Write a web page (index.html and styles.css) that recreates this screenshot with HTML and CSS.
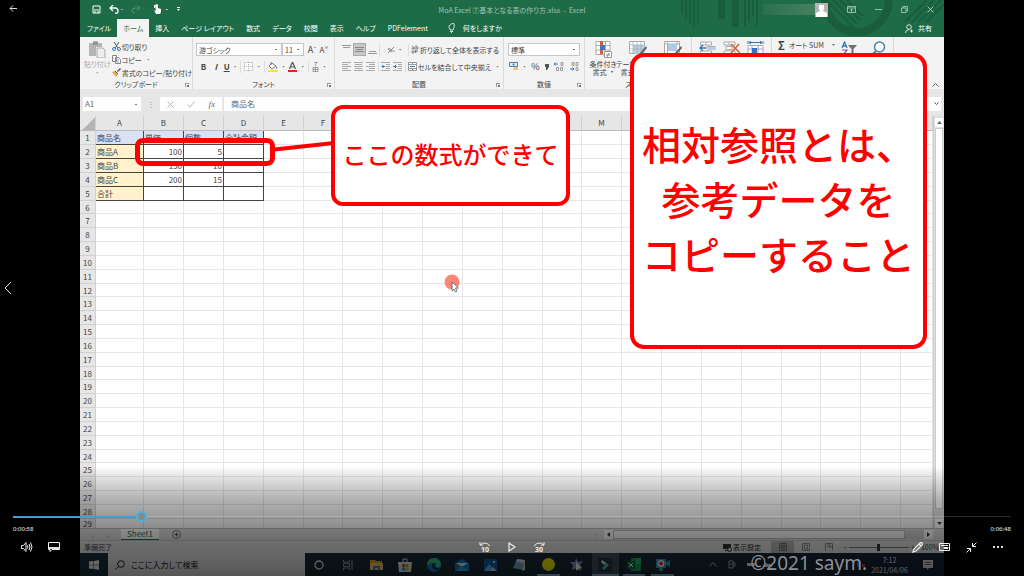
FILE: index.html
```html
<!DOCTYPE html>
<html lang="ja">
<head>
<meta charset="utf-8">
<title>MoA Excel</title>
<link rel="stylesheet" href="styles.css">
</head>
<body>
<div class="player">
  <main class="desktop">
    <header class="titlebar">
      <svg class="titlebar-art" viewBox="0 0 264 37" aria-hidden="true">
        <g fill="#1a5d3c"><path d="M1 0h2v14H1zM5 0h2v19H5zM9 0h2v23H9zM13 0h2v27h-2zM17 0h2v23h-2zM38 0h7v19h-7zM52 0h7v27h-7zM64 0h2v26h-2zM68 0h2v22h-2zM72 0h2v17h-2zM76 0h2v26h-2z"/></g>
        <g fill="none" stroke="#1a5d3c"><circle cx="177" cy="0" r="32" stroke-width="8"/><path stroke-width="2" d="M146 0l28 28M153 0l24 24M160 0l20 20M167 0l16 16M225 22l22-22M232 22l22-22M239 22l22-22M246 22l18-18"/></g>
      </svg>
      <div class="quick">
        <button aria-label="保存"><svg width="9" height="9" viewBox="0 0 9 9"><path d="M1 1h7v7H1zM2 5h5M3 6v2M6 6v2" fill="none" stroke="#fff"/></svg></button>
        <button aria-label="元に戻す"><svg width="14" height="9" viewBox="0 0 14 9"><path d="M4 0L1 3l3 3M1 3h5q3 0 3 3t-3 2" fill="none" stroke="#fff" stroke-width="1.3"/><path d="M12 4h2l-1 1z" fill="#fff"/></svg></button>
        <button aria-label="やり直し" class="faded"><svg width="14" height="9" viewBox="0 0 14 9"><path d="M6 0l3 3-3 3M9 3H4Q1 3 1 6q0 2 3 2" fill="none" stroke="#fff"/><path d="M12 4h2l-1 1z" fill="#fff"/></svg></button>
        <button aria-label="タッチ"><svg width="15" height="11" viewBox="0 0 15 11"><path d="M2 1l2-1 1 1v3l3 1v3L7 10H3L1 6l2 1zM1 1h1v3H1z" fill="#fff"/><path d="M12 5h3l-1 1z" fill="#fff"/></svg></button>
        <button aria-label="カスタマイズ"><svg width="5" height="5" viewBox="0 0 5 5"><path d="M1 0h3v1H1zM1 2h3L2.500 4z" fill="#fff"/></svg></button>
      </div>
      <div class="doc-title">MoA Excel ⑦基本となる表の作り方.xlsx&nbsp; -&nbsp; Excel</div>
      <div class="window-tools">
        <span class="user-name"></span>
        <svg class="avatar" width="13" height="14" viewBox="0 0 13 14"><path d="M0 0h13v14H0z" fill="#b5b5b5"/><path d="M4 2h5v5H8v1l4 2v4H1v-4l4-2V7H4z" fill="#fff"/></svg>
        <button aria-label="リボンの表示"><svg width="9" height="7" viewBox="0 0 9 7"><path d="M.5.5h8v6h-8zM.5 2h8M4.500 6V3M3 4.500L4.500 3 6 4.500" fill="none" stroke="#b7d1c3" stroke-width=".8"/></svg></button>
        <button aria-label="最小化"><svg width="7" height="7" viewBox="0 0 7 7"><path d="M0 3.500h7" stroke="#b7d1c3" stroke-width=".8"/></svg></button>
        <button aria-label="元のサイズ"><svg width="7" height="7" viewBox="0 0 7 7"><path d="M.5 2h4.500v4.500H.5zM2 2V.5h4.500V5H5" fill="none" stroke="#b7d1c3" stroke-width=".8"/></svg></button>
        <button aria-label="閉じる"><svg width="7" height="7" viewBox="0 0 7 7"><path d="M.5.5l6 6M6.500.5l-6 6" stroke="#cfe0d7" stroke-width=".8"/></svg></button>
      </div>
    </header>
    <nav class="tabs">
      <button>ファイル</button><button class="current">ホーム</button><button>挿入</button><button>ページ レイアウト</button><button>数式</button><button>データ</button><button>校閲</button><button>表示</button><button>ヘルプ</button><button>PDFelement</button>
      <button class="tell"><svg width="7" height="10" viewBox="0 0 7 10"><path d="M2 7Q2 6 1 4.500T3.500.8 6 4.500Q5 6 5 7zM2 8.500h3M3 9.500h1" fill="none" stroke="#fff" stroke-width=".8"/></svg>何をしますか</button>
      <button class="share"><svg width="8" height="9" viewBox="0 0 8 9"><circle cx="4" cy="3" r="2.300" fill="none" stroke="#fff" stroke-width=".8"/><path d="M.5 9Q.5 6 4 5.500M5 7h3M6.500 5.500v3" fill="none" stroke="#fff" stroke-width=".8"/></svg>共有</button>
    </nav>

    <section class="ribbon">
      <div class="group">
        <div class="group-body clipboard">
          <button class="paste"><svg width="18" height="18" viewBox="0 0 18 18"><path d="M1 3h4V1h5v2h4v4H8v9H1z" fill="#b5b5b5"/><path d="M5 2h5v3H5z" fill="#929292"/><path d="M9 8h6l2 2v8H9z" fill="#eee" stroke="#aaa"/></svg>貼り付け<i class="caret"></i></button>
          <div class="stack">
            <button><svg width="9" height="9" viewBox="0 0 9 9"><path d="M2 0l4 6M7 0L3 6" stroke="#555"/><circle cx="2" cy="7" r="1.500" fill="none" stroke="#2f78b9"/><circle cx="7" cy="7" r="1.500" fill="none" stroke="#2f78b9"/></svg>切り取り</button>
            <button><svg width="9" height="9" viewBox="0 0 9 9"><path d="M.5.5h4v6h-4zM3.500 2.500h3l2 2v4h-5z" fill="#fff" stroke="#888"/><path d="M5 5h2M5 7h2M1.500 3h1" stroke="#4b8dc5" stroke-width=".7"/></svg>コピー <i class="caret"></i></button>
            <button><svg width="9" height="9" viewBox="0 0 9 9"><path d="M5 3l3-3 1 1-3 3z" fill="#555"/><path d="M0 4l3-1 3 3-2 3z" fill="#eda64a"/><path d="M3 3l3 3" stroke="#555"/></svg>書式のコピー/貼り付け</button>
          </div>
        </div>
        <div class="group-name">クリップボード<i class="launcher"></i></div>
      </div>
      <div class="group">
        <div class="group-body rows">
          <div class="tool-row">
            <select class="font-name" aria-label="フォント"><option>游ゴシック</option></select><select class="font-size" aria-label="サイズ"><option>11</option></select>
            <button class="grow">A<sup>ˆ</sup></button><button class="shrink">A<sup>ˇ</sup></button>
          </div>
          <div class="tool-row format-row">
            <button class="letter"><b>B</b></button><button class="letter"><b><em>I</em></b></button><button class="letter"><b><u>U</u></b><i class="caret"></i></button><i class="bar"></i>
            <button aria-label="罫線"><svg width="9" height="9" viewBox="0 0 9 9"><path d="M.5.5h8v8h-8zM4.500 0v9M0 4.500h9" fill="#fff" stroke="#aaa" stroke-dasharray="1 1"/></svg><i class="caret"></i></button><i class="bar"></i>
            <button aria-label="塗りつぶし"><svg width="10" height="10" viewBox="0 0 10 10"><path d="M4 1l4 3-4 3-3-3zM3 0v3" fill="#fff" stroke="#777"/><path d="M8 4q2 2 1 3T8 4" fill="#2f78b9"/><path d="M0 8h10v2H0z" fill="#ffe800"/></svg><i class="caret"></i></button>
            <button aria-label="文字の色"><svg width="9" height="10" viewBox="0 0 9 10"><path d="M1.500 7l3-7 3 7M3 5h3.500" fill="none" stroke="#555" stroke-width="1.200"/><path d="M0 8h9v2H0z" fill="#f21d14"/></svg><i class="caret"></i></button><i class="bar"></i>
            <button aria-label="ふりがな"><svg width="7" height="10" viewBox="0 0 7 10"><path d="M2 .5h3L3 4M1 5.500h5v4H1zM1 7.500h5M3.500 5v4" fill="none" stroke="#888" stroke-width=".8"/></svg><i class="caret"></i></button>
          </div>
        </div>
        <div class="group-name">フォント<i class="launcher"></i></div>
      </div>
      <div class="group">
        <div class="group-body rows">
          <div class="tool-row align-row">
            <button aria-label="上揃え"><svg width="9" height="9" viewBox="0 0 9 9"><path d="M0 .5h9M1 2.500h7" stroke="#999"/></svg></button>
            <button aria-label="中央" class="pressed"><svg width="9" height="9" viewBox="0 0 9 9"><path d="M0 2.500h9M1 4.500h7M0 6.500h9" stroke="#888"/></svg></button>
            <button aria-label="下揃え"><svg width="9" height="9" viewBox="0 0 9 9"><path d="M1 6.500h7M0 8.500h9" stroke="#999"/></svg></button><i class="bar"></i>
            <button aria-label="方向" class="twin"><svg width="8" height="8" viewBox="0 0 8 8"><path d="M1 7l6-6M1 3q2-2 3 1T1 3M4 6q3-3 3 0" fill="none" stroke="#888"/></svg><i class="caret"></i></button><i class="bar"></i>
            <button class="text-tool"><svg width="8" height="9" viewBox="0 0 8 9"><path d="M1 3h3v1H1zM1 1l3 2M5 0v4h2V2H5M1 6h2v2H1z" fill="none" stroke="#888"/><path d="M7 6H4m1-1L4 6l1 2" stroke="#2f78b9" fill="none"/></svg>折り返して全体を表示する</button>
          </div>
          <div class="tool-row align-row">
            <button aria-label="左揃え"><svg width="9" height="9" viewBox="0 0 9 9"><path d="M0 .5h9M0 2.500h6M0 4.500h9M0 6.500h6M0 8.500h9" stroke="#aaa"/></svg></button>
            <button aria-label="中央揃え"><svg width="9" height="9" viewBox="0 0 9 9"><path d="M0 .5h9M1 2.500h7M0 4.500h9M1 6.500h7M0 8.500h9" stroke="#aaa"/></svg></button>
            <button aria-label="右揃え"><svg width="9" height="9" viewBox="0 0 9 9"><path d="M0 .5h9M3 2.500h6M0 4.500h9M3 6.500h6M0 8.500h9" stroke="#aaa"/></svg></button><i class="bar"></i>
            <button aria-label="インデント減"><svg width="9" height="9" viewBox="0 0 9 9"><path d="M0 .5h9M5 2.500h4M5 4.500h4M5 6.500h4M0 8.500h9" stroke="#aaa"/><path d="M4 4.500H1M2.500 3L1 4.500 2.500 6" stroke="#2f78b9" fill="none"/></svg></button>
            <button aria-label="インデント増"><svg width="9" height="9" viewBox="0 0 9 9"><path d="M0 .5h9M5 2.500h4M5 4.500h4M5 6.500h4M0 8.500h9" stroke="#aaa"/><path d="M0 4.500h3M2 3l1.500 1.500L2 6" stroke="#2f78b9" fill="none"/></svg></button><i class="bar"></i>
            <button class="text-tool"><svg width="9" height="9" viewBox="0 0 9 9"><path d="M.5.5h8v8h-8zM0 2.500h9M0 6.500h9M4.500 0v2M4.500 7v2" fill="#fff" stroke="#999"/><path d="M2 4.500h5" stroke="#2f78b9"/></svg>セルを結合して中央揃え<i class="caret"></i></button>
          </div>
        </div>
        <div class="group-name">配置<i class="launcher"></i></div>
      </div>
      <div class="group">
        <div class="group-body rows">
          <div class="tool-row"><select class="number-format" aria-label="表示形式"><option>標準</option></select></div>
          <div class="tool-row number-row">
            <button aria-label="通貨"><svg width="10" height="9" viewBox="0 0 10 9"><path d="M.5.5h8v4h-8z" fill="#d7e8f5" stroke="#4382b5"/><circle cx="4.500" cy="2.500" r="1" fill="#4382b5"/><path d="M5 5h4v3H4z" fill="#ecc27e"/></svg><i class="caret"></i></button>
            <button>%</button>
            <button aria-label="桁区切り"><svg width="4" height="6" viewBox="0 0 4 6"><path d="M0 0h4v3L2 6H1V3H0z" fill="#555"/></svg></button>
            <button aria-label="小数点以下を増やす"><svg width="10" height="9" viewBox="0 0 10 9"><path d="M4 2H0m1.500-1.500L0 2l1.500 1.500" stroke="#2f78b9" fill="none"/><path d="M7 .5h2v3H7zM2.500 5.500h2v3h-2zM6.500 5.500h2v3h-2z" fill="none" stroke="#888" stroke-width=".8"/></svg></button>
            <button aria-label="小数点以下を減らす"><svg width="10" height="9" viewBox="0 0 10 9"><path d="M1 7h4M3.500 5.500L5 7 3.500 8.500" stroke="#2f78b9" fill="none"/><path d="M3 .5h2v3H3zM7 .5h2v3H7zM7 5.500h2v3H7z" fill="none" stroke="#888" stroke-width=".8"/></svg></button>
          </div>
        </div>
        <div class="group-name">数値<i class="launcher"></i></div>
      </div>
      <div class="group">
        <div class="group-body big-tools">
          <button><svg width="17" height="17" viewBox="0 0 17 17"><path d="M1 .5h14v13H1zM1 4.500h14M1 9h14M10.500 0v13" fill="#fff" stroke="#aaa"/><path d="M5 0h3v4H5zM5 9h3v4H5z" fill="#d85c38"/><path d="M5 4h5v5H5z" fill="#3e77b5"/><path d="M9.500 10.500h7v6h-7z" fill="#fff" stroke="#999"/><path d="M11 14h4M14 12l-2 4" stroke="#666" stroke-width=".7"/></svg>条件付き<span>書式<i class="caret"></i></span></button>
          <button><svg width="18" height="17" viewBox="0 0 18 17"><path d="M.5.5h15v12H.5z" fill="#fff" stroke="#aaa"/><path d="M4 4h12v9H4z" fill="#b5d0e7"/><path d="M0 4h16M0 8h16M4 0v13M8 0v13M12 0v13" stroke="#aaa" stroke-width=".7"/><path d="M17 5l-7 8 2 1 6-7z" fill="#666"/></svg>テーブルとして<span>書式設定<i class="caret"></i></span></button>
          <button><svg width="18" height="17" viewBox="0 0 18 17"><path d="M.5.5h15v12H.5zM0 3h16M3.500 0v13M13 0v4" fill="#fff" stroke="#aaa"/><path d="M4 3h9v7H4z" fill="#a9cbe8"/><path d="M17 5l-7 8 2 1 6-7z" fill="#666"/></svg>セルの<span>スタイル</span></button>
        </div>
        <div class="group-name">スタイル</div>
      </div>
      <div class="group">
        <div class="group-body big-tools">
          <button><svg width="17" height="17" viewBox="0 0 17 17"><path d="M1.500 1h11v3h-11zM7 1v3M8 5.500h8v3H8zM1.500 10h11v3h-11z" fill="#fff" stroke="#aaa"/><path d="M8 6h8v3H8z" fill="#b5d0e7"/><path d="M7 7H1m3-3L1 7l3 3" stroke="#2f78b9" fill="none" stroke-width="1.300"/></svg>挿入</button>
          <button><svg width="17" height="17" viewBox="0 0 17 17"><path d="M1 1h11v3H1zM6 1v3M3 5.500h6v3H3zM1 10h11v3H1z" fill="#fff" stroke="#aaa"/><path d="M8 3l9 9M16 3l-8 9" stroke="#dc5a34" stroke-width="1.500"/></svg>削除</button>
          <button><svg width="17" height="17" viewBox="0 0 17 17"><path d="M1 4.500h15v10H1zM1 8h15M5 4v9M11 4v9" fill="#fff" stroke="#aaa"/><path d="M5 7h5v5H5z" fill="#2f78b9"/><path d="M2 1.500h13M4 0L2 1.500 4 3M13 0l2 1.500L13 3M1 0v3M16 0v3" stroke="#2f78b9" fill="none"/></svg>書式</button>
        </div>
        <div class="group-name">セル</div>
      </div>
      <div class="group">
        <div class="group-body edit-tools">
          <button class="sum"><b>Σ</b>オート SUM<i class="caret"></i></button>
          <button aria-label="並べ替え"><svg width="16" height="17" viewBox="0 0 16 17"><path d="M1 7l2.500-6L6 7M2 5h3" fill="none" stroke="#2f78b9" stroke-width="1.300"/><path d="M1 9h5l-5 6h5" fill="none" stroke="#8d55a8" stroke-width="1.200"/><path d="M7 4h9l-3.500 4v6h-2V8z" fill="#707070"/></svg></button>
          <button aria-label="検索"><svg width="15" height="17" viewBox="0 0 15 17"><circle cx="8.500" cy="6" r="5" fill="#fff" stroke="#4382b5" stroke-width="1.500"/><path d="M5 10l-4 4" stroke="#4382b5" stroke-width="2"/></svg></button>
        </div>
        <div class="group-name">編集</div>
      </div>
      <div class="ribbon-end"><button aria-label="リボンを折りたたむ"><svg width="7" height="4" viewBox="0 0 7 4"><path d="M.5 3.500l3-3 3 3" fill="none" stroke="#666"/></svg></button></div>
    </section>

    <div class="formula-bar">
      <select class="name-box" aria-label="名前ボックス"><option>A1</option></select>
      <span class="grip">⋮</span>
      <div class="fx">
        <button aria-label="キャンセル"><svg width="7" height="7" viewBox="0 0 7 7"><path d="M.5.5l6 6M6.500.5l-6 6" stroke="#b5b5b5"/></svg></button>
        <button aria-label="入力"><svg width="8" height="7" viewBox="0 0 8 7"><path d="M.5 4L3 6l4.500-5.500" fill="none" stroke="#b5b5b5"/></svg></button>
        <button class="fx-sign">fx</button>
      </div>
      <input class="formula" aria-label="数式" value="商品名">
      <button class="expand" aria-label="展開"><svg width="5" height="4" viewBox="0 0 5 4"><path d="M.5.5l2 2 2-2" fill="none" stroke="#555"/></svg></button>
    </div>

    <div class="sheet-area">
      <div class="grid-clip"><table class="cells" id="cells"></table></div>
      <div class="vscroll">
        <button aria-label="上へ"><svg width="5" height="3" viewBox="0 0 5 3"><path d="M0 3l2.500-3L5 3z" fill="#666"/></svg></button>
        <div class="vthumb"></div>
        <button aria-label="下へ"><svg width="5" height="3" viewBox="0 0 5 3"><path d="M0 0l2.500 3L5 0z" fill="#444"/></svg></button>
      </div>
    </div>

    <div class="sheet-tabs">
      <div class="sheet-nav"><span>‹</span><span>›</span></div>
      <button class="sheet-tab">Sheet1</button>
      <button aria-label="新しいシート" class="add-sheet"><svg width="9" height="9" viewBox="0 0 9 9"><circle cx="4.500" cy="4.500" r="4" fill="none" stroke="#666" stroke-width=".8"/><path d="M4.500 2.500v4M2.500 4.500h4" stroke="#555"/></svg></button>
      <div class="hscroll">
        <span class="grip">⋮</span>
        <button aria-label="左へ"><svg width="3" height="5" viewBox="0 0 3 5"><path d="M3 0v5L0 2.500z" fill="#333"/></svg></button>
        <div class="htrack"><div class="hthumb"></div></div>
        <button aria-label="右へ"><svg width="3" height="5" viewBox="0 0 3 5"><path d="M0 0v5l3-2.500z" fill="#333"/></svg></button>
      </div>
    </div>
    <div class="status">
      <span>準備完了</span>
      <div class="status-tools">
        <button class="display-set"><svg width="9" height="9" viewBox="0 0 9 9"><path d="M0 1h8v5H0zM2 7h3v1H2z" fill="#333"/><circle cx="6.500" cy="6.500" r="2" fill="#ddd" stroke="#333"/></svg>表示設定</button>
        <button aria-label="標準" class="view pressed"><svg width="8" height="8" viewBox="0 0 8 8"><path d="M.5.5h7v7h-7zM0 3h8M0 5h8M3 0v8M5 0v8" fill="none" stroke="#666" stroke-width=".8"/></svg></button>
        <button aria-label="ページ レイアウト" class="view"><svg width="8" height="8" viewBox="0 0 8 8"><path d="M.5.5h7v7h-7zM2.500 2v4h3V2z" fill="none" stroke="#777" stroke-width=".8"/></svg></button>
        <button aria-label="改ページ" class="view"><svg width="8" height="8" viewBox="0 0 8 8"><path d="M.5 7.500v-7h7v7M3 0v4h5M5 0v4" fill="none" stroke="#777" stroke-width=".8"/></svg></button>
        <span class="minus">−</span><input class="zoom" type="range" aria-label="ズーム" min="0" max="100" value="49"><span>+</span><span class="percent">100%</span>
      </div>
    </div>

    <footer class="taskbar">
      <button class="start" aria-label="スタート"><svg width="10" height="10" viewBox="0 0 10 10"><path d="M0 1.500L4.500 1v3.700H0zM5 1l5-1v4.700H5zM0 5.200h4.500V9L0 8.500zM5 5.200h5V10L5 9z" fill="#fff"/></svg></button>
      <label class="search"><svg width="10" height="10" viewBox="0 0 10 10"><circle cx="6" cy="4" r="3.300" fill="none" stroke="#222"/><path d="M3.500 6.500L.5 9.500" stroke="#222"/></svg><input aria-label="検索" placeholder="ここに入力して検索"></label>
      <div class="apps">
        <button aria-label="Cortana"><svg width="10" height="10" viewBox="0 0 10 10"><circle cx="5" cy="5" r="4" fill="none" stroke="#eee" stroke-width="1.300"/></svg></button>
        <button aria-label="タスク ビュー"><svg width="10" height="10" viewBox="0 0 10 10"><path d="M.5 0v2h6V0M.5 10V8h6v2M.5 3.500h6v3h-6zM9 0v10M8 4h2" fill="none" stroke="#999"/></svg></button>
        <button aria-label="エクスプローラー"><svg width="13" height="12" viewBox="0 0 13 12"><path d="M0 1h5l1 1h6v9H0z" fill="#e5a737"/><path d="M0 4h13v7H0z" fill="#ffd267"/><path d="M3 11V7h7v4H8V9H5v2z" fill="#3184d2"/></svg></button>
        <button aria-label="ストア"><svg width="14" height="14" viewBox="0 0 14 14"><path d="M5 4V1h4v3" fill="none" stroke="#ddd"/><path d="M0 4h14l-1 10H1z" fill="#eee"/><path d="M4 6h3v3H4z" fill="#ed4d25"/><path d="M7.500 6h3v3h-3z" fill="#7dba23"/><path d="M4 9.500h3v3H4z" fill="#1fa4ea"/><path d="M7.500 9.500h3v3h-3z" fill="#fdb813"/></svg></button>
        <button aria-label="Edge"><svg width="14" height="14" viewBox="0 0 14 14"><circle cx="7" cy="7" r="7" fill="#1679c8"/><path d="M0 6Q1 0 7 0t7 6q0 4-5 3 1-4-3-4T0 7z" fill="#38c78e"/><path d="M6 5q-3 4 2 7 3 1 5-2-3 1-5-1-1-2 0-3z" fill="#0b3158"/></svg></button>
        <button aria-label="メール"><svg width="14" height="12" viewBox="0 0 14 12"><path d="M0 4l7-4 7 4v8H0z" fill="#137bc5"/><path d="M1 4h12L7 8z" fill="#eee"/><path d="M0 12l7-5 7 5z" fill="#31a8e9"/></svg></button>
        <button aria-label="フォト"><svg width="13" height="12" viewBox="0 0 13 12"><path d="M0 0h13v12H0z" fill="#175db1"/><path d="M0 12l5-7 6 7z" fill="#59b9f5"/><path d="M5 12l4-4 4 4z" fill="#a5d7f7"/><circle cx="10" cy="3" r="1" fill="#fff"/></svg></button>
        <button aria-label="メモ"><svg width="13" height="13" viewBox="0 0 13 13"><path d="M4 1l8 1-2 10-10-2z" fill="#6bafc2"/><path d="M4 1l8 1-1 3-8-1z" fill="#cde"/><path d="M12 2v10l-3 1z" fill="#dbd5b4"/></svg></button>
        <button aria-label="イエロー" class="open"><svg width="13" height="13" viewBox="0 0 13 13"><circle cx="6.500" cy="6.500" r="6.500" fill="#fff200"/></svg></button>
        <button aria-label="スター"><svg width="13" height="13" viewBox="0 0 13 13"><path d="M6 0l2 4 5-1-3 4 2 5-5-2-5 2 1-5-3-3h5z" fill="#8996c5"/><path d="M6 4l6 6H9l1 3-2-2-2 2z" fill="#fff"/></svg></button>
        <button aria-label="Filmora" class="open active"><svg width="14" height="14" viewBox="0 0 14 14"><path d="M0 0h14v14H0z" fill="#27363f"/><path d="M4 2l4 3-2 2-3-3z" fill="#eee"/><path d="M7 4l4 3-5 5-2-2 3-3z" fill="#41d2ba"/></svg></button>
        <button aria-label="Excel" class="open"><svg width="14" height="13" viewBox="0 0 14 13"><path d="M4 0h10v13H4z" fill="#17a35e"/><path d="M9 0h5v6H9z" fill="#23bd73"/><path d="M0 3h8v8H0z" fill="#0c6939"/><path d="M2 5l4 4M6 5L2 9" stroke="#fff"/></svg></button>
        <button aria-label="カメラ" class="open"><svg width="14" height="13" viewBox="0 0 14 13"><path d="M0 1h10v9H0zM10 4l4-2v7l-4-2zM3 10h4v3H3z" fill="#2b9fd0"/><circle cx="5" cy="5.500" r="3.500" fill="#fff"/><circle cx="5" cy="5.500" r="2" fill="#ed291b"/></svg></button>
      </div>
      <div class="tray">
        <svg width="8" height="5" viewBox="0 0 8 5"><path d="M.5 4.500l3.500-4 3.500 4" fill="none" stroke="#bbb"/></svg>
        <svg width="8" height="9" viewBox="0 0 8 9"><path d="M1 1h4v7H1zM5 3h2v3H5M2 4h2" fill="none" stroke="#aaa"/></svg>
        <svg width="121" height="9" viewBox="0 0 121 9"><path d="M0 3h8v3H0zM16 6q2-5 5-2 4-1 4 3h-9z" fill="#eee"/><path d="M110 2q3-3 4 0v5h-4z" fill="#1d7fe0"/><path d="M115 4h3v3h-3z" fill="#d3382c"/></svg>
      </div>
      <div class="clock"><span>7:12</span><span>2021/04/06</span></div>
      <button class="notice" aria-label="通知"><svg width="10" height="10" viewBox="0 0 10 10"><path d="M0 0h10v8H6l-2 2V8H0z" fill="#ddd"/><path d="M2 2.500h6M2 4.500h6" stroke="#333" stroke-width=".7"/></svg></button>
    </footer>

    <div class="mark-box"></div>
    <svg class="mark-line" width="66" height="12" viewBox="0 0 66 12" aria-hidden="true"><path d="M1 9L65 2" stroke="#fe0000" stroke-width="4"/></svg>
    <div class="callout callout-small">ここの数式ができて</div>
    <div class="callout callout-large"><p>相対参照とは、</p><p>参考データを</p><p>コピーすること</p></div>
    <svg class="pointer" width="18" height="19" viewBox="0 0 18 19" aria-hidden="true"><circle cx="8" cy="8" r="7.500" fill="#ff8578"/><path d="M8 8v9l2-2 1.500 3 1.500-1-1.500-3h3z" fill="#fff" stroke="#555" stroke-width=".8"/></svg>
  </main>

  <div class="scrim"></div>
  <button class="back" aria-label="戻る"><svg width="8" height="7" viewBox="0 0 8 7"><path d="M8 3.500H1M4 .5l-3 3 3 3" fill="none" stroke="#ddd"/></svg></button>
  <button class="previous" aria-label="前へ"><svg width="8" height="13" viewBox="0 0 8 13"><path d="M7 .5l-6 6 6 6" fill="none" stroke="#ddd"/></svg></button>
  <div class="controls">
    <input class="seek" type="range" aria-label="再生位置" min="0" max="466" value="58">
    <div class="times"><span>0:00:58</span><span>0:06:48</span></div>
    <div class="control-row">
      <div class="left-controls">
        <button aria-label="音量"><svg width="12" height="10" viewBox="0 0 12 10"><path d="M.5 3.500h2l2.500-3v9l-2.500-3h-2zM6.500 3.500q1 1.500 0 3M8 2q2 3 0 6M9.500.5q3 4.500 0 9" fill="none" stroke="#eee"/></svg></button>
        <button aria-label="字幕"><svg width="12" height="10" viewBox="0 0 12 10"><path d="M.5.5h11v7H4L2 9.500v-2H.5z" fill="none" stroke="#eee"/><path d="M1 5h10v2H1z" fill="#ddd"/></svg></button>
      </div>
      <div class="center-controls">
        <button aria-label="10秒戻る" class="skip"><svg width="12" height="5" viewBox="0 0 12 5"><path d="M1 0v3h3M1 3q5-4.500 10 1" fill="none" stroke="#eee"/></svg><span>10</span></button>
        <button aria-label="再生"><svg width="8" height="10" viewBox="0 0 8 10"><path d="M1 1l6 4-6 4z" fill="none" stroke="#eee" stroke-width="1.200"/></svg></button>
        <button aria-label="30秒進む" class="skip"><svg width="12" height="5" viewBox="0 0 12 5"><path d="M11 0v3H8M11 3Q6-1.500 1 4" fill="none" stroke="#eee"/></svg><span>30</span></button>
      </div>
      <div class="right-controls">
        <button aria-label="編集"><svg width="11" height="11" viewBox="0 0 11 11"><path d="M1 10l1-3 6-6q1-1 2 0t0 2L4 9zM7 2l2 2" fill="none" stroke="#eee" stroke-width="1.200"/></svg></button>
        <button aria-label="ミニ表示"><svg width="11" height="8" viewBox="0 0 11 8"><path d="M.5.5h10v7H.5zM2 2.500h7M5 4.500h4v1H5z" fill="none" stroke="#eee"/></svg></button>
        <button aria-label="縮小"><svg width="11" height="11" viewBox="0 0 11 11"><path d="M10.500.5l-4 4M6.500 1v3.500H10M.5 10.500l4-4M1 6.500h3.500V10" fill="none" stroke="#eee"/></svg></button>
        <button aria-label="その他"><svg width="10" height="2" viewBox="0 0 10 2"><path d="M0 0h2v2H0zM4 0h2v2H4zM8 0h2v2H8z" fill="#ddd"/></svg></button>
      </div>
    </div>
  </div>
  <div class="watermark">©2021 saym.</div>
</div>
<script src="sheet.js"></script>
</body>
</html>
```
FILE: styles.css
```css
* { box-sizing: border-box; }
body { margin: 0; background: #000; font: 7px/10px "Noto Sans CJK JP", "Noto Sans", sans-serif; font-feature-settings: "palt"; color: #444; }
button { margin: 0; padding: 0; border: 0; background: none; color: inherit; font: inherit; font-feature-settings: inherit; display: flex; align-items: center; justify-content: center; white-space: nowrap; }
select, input { margin: 0; border: 0; font: inherit; color: inherit; border-radius: 0; outline: 0; }
svg { flex: none; display: block; }
p { margin: 0; }
.player { position: relative; height: 100vh; overflow: hidden; background: #000; }
.desktop { position: relative; height: 100%; margin: 0 80px; display: flex; flex-direction: column; overflow: hidden; background: #e6e6e6; }

.titlebar { display: grid; grid-template-columns: 1fr auto 1fr; align-items: center; height: 19px; background: #1e6b47; color: #a5c5b4; flex: none; }
.titlebar-art { position: absolute; top: 0; right: 0; z-index: 1; width: 264px; height: 37px; }
.quick { display: flex; align-items: center; gap: 8px; padding-left: 12px; }
.faded { opacity: .25; }
.window-tools { position: relative; z-index: 2; display: flex; align-items: center; justify-content: flex-end; gap: 19px; padding-right: 10px; }
.user-name { width: 52px; height: 11px; background: linear-gradient(90deg, #2a714f, #47805f); margin-right: -19px; }

.tabs { position: relative; display: flex; align-items: stretch; height: 18px; flex: none; padding-left: 1px; background: #1e6b47; color: #fff; }
.tabs button { padding: 0 6px; }
.tabs .current { background: #f3f3f3; color: #1e6b47; }
.tabs .tell { gap: 8px; padding-left: 14px; }
.tabs .share { z-index: 2; gap: 5px; margin-left: auto; padding-right: 12px; }

.ribbon { display: grid; grid-template-columns: 113fr 142fr 169fr 81fr 107fr 80fr 122fr 50fr; height: 52px; flex: none; background: #f3f3f3; }
.group { display: flex; flex-direction: column; min-width: 0; position: relative; border-right: 1px solid #dadada; }
.group-body { height: 43px; padding: 3px 4px 0; }
.group-name { display: flex; justify-content: center; line-height: 9px; }
.launcher { position: absolute; right: 3px; bottom: 2px; width: 4px; height: 4px; border-top: 1px solid #999; border-left: 1px solid #999; }
.launcher::after { content: ""; display: block; width: 2px; height: 2px; margin: 1px; background: #777; }
.caret { width: 3px; height: 2px; margin-left: 4px; background: #777; clip-path: polygon(0 0, 100% 0, 50% 100%); flex: none; }
.clipboard { display: flex; gap: 1px; }
.paste { flex-direction: column; justify-content: flex-start; width: 27px; gap: 1px; color: #aaa; }
.paste .caret { margin: 2px 0 0; background: #bbb; }
.stack { display: flex; flex-direction: column; }
.stack button { height: 13px; justify-content: flex-start; gap: 1px; }
.rows { display: flex; flex-direction: column; gap: 4px; padding-top: 6px; }
.tool-row { display: flex; align-items: center; height: 13px; }
.ribbon select, .name-box { appearance: none; height: 13px; padding: 0 2px; border: 1px solid #c6c6c6; background: #fff linear-gradient(#777, #777) right 4px center / 2px 1px no-repeat; }
.font-name { width: 86px; margin-left: -1px; }
.font-size { width: 22px; margin-right: 2px; }
.grow, .shrink { width: 12px; font-size: 9px; }
.shrink { font-size: 8px; }
.grow sup, .shrink sup { font-size: 7px; line-height: 1px; color: #2f78b9; }
.format-row { font-size: 8px; justify-content: space-between; padding: 0 4px 0 2px; }
.letter { min-width: 9px; }
.bar { width: 1px; height: 12px; background: #ddd; margin: 0 1px; }
.format-row .bar { margin: 0; }
.align-row { padding-left: 1px; }
.align-row button { width: 13px; height: 13px; }
.align-row .twin { width: 26px; }
.align-row .text-tool { width: auto; gap: 1px; padding-left: 1px; }
.group-body .pressed { background: #c8c8c8; border: 1px solid #aaa; }
.number-format { width: 73px; }
.number-row { justify-content: space-between; padding: 0 1px; font-size: 9px; }
.big-tools { display: flex; justify-content: space-between; padding: 4px 4px 0; line-height: 8px; }
.big-tools button { flex-direction: column; justify-content: flex-start; width: 28px; }
.big-tools svg { margin-bottom: 2px; }
.big-tools span { display: flex; align-items: center; }
.edit-tools { display: flex; align-items: flex-start; padding: 3px 6px 0; gap: 14px; }
.edit-tools button + button { margin-top: 1px; }
.sum { gap: 4px; margin-right: -8px; }
.sum b { font-size: 11px; }
.ribbon-end { display: flex; align-items: flex-end; justify-content: flex-end; padding: 0 5px 2px; }

.formula-bar { display: flex; align-items: stretch; height: 27px; padding: 8px 3px 5px; flex: none; background: #e6e6e6; font-size: 8px; font-feature-settings: normal; color: #666; }
.formula-bar .name-box { width: 58px; height: 14px; border: 0; }
.grip { width: 19px; text-align: center; color: #999; line-height: 14px; }
.fx { display: grid; grid-template-columns: repeat(3, 1fr); width: 62px; background: #fff; margin-right: 2px; }
.fx-sign { font: italic 9px "Liberation Serif", serif; }
.formula { flex: 1; min-width: 0; padding: 0 7px; background: #fff; }
.expand { width: 10px; background: #fff; }

.sheet-area { display: flex; flex: 1; min-height: 0; }
.grid-clip { flex: 1; min-width: 0; overflow: hidden; background: #fff; }
.cells { table-layout: fixed; width: 100%; border-spacing: 0; font-size: 8px; line-height: 12px; font-feature-settings: normal; color: #444; }
.col-head { width: 16px; }
.col-a { width: 48px; }
.col { width: 40px; }
.col-slim { width: 39px; }
.cells th, .cells td { padding: 0 1px; height: 14px; overflow: hidden; white-space: nowrap; border-right: 1px solid #e6e6e6; border-bottom: 1px solid #e6e6e6; }
.cells tbody tr:nth-child(6n) > * { height: 13px; line-height: 11px; }
.cells tbody tr:last-child > * { height: 11px; line-height: 10px; }
.cells th { background: #e6e6e6; font-weight: 400; border-color: #d0d0d0; text-align: center; }
.cells thead th { height: 15px; border-bottom-color: #bbb; }
.cells .corner { background: linear-gradient(135deg, #e6e6e6 55%, #b4b4b4 56%); }
.cells .boxed { border-color: #444; }
.cells .heading { background: #d9e1f2; }
.cells .item { background: #fff2cc; }
.cells .number { text-align: right; }
.vscroll { display: flex; flex-direction: column; width: 11px; padding: 2px 1px 0; border-left: 1px solid #ccc; background: #e0e0e0; }
.vscroll button { height: 9px; background: #fff; }
.vthumb { flex: 1; margin: 1px 0 10px; background: #fff; border: 1px solid #ccc; }

.sheet-tabs { display: flex; align-items: center; height: 13px; flex: none; border-top: 1px solid #bbb; border-bottom: 1px solid #ccc; background: #e0e0e0; }
.sheet-nav { display: flex; justify-content: space-around; width: 41px; padding: 0 6px; color: #888; }
.sheet-tab { width: 38px; height: 11px; font-size: 8px; color: #1e6b47; background: #fff; border-bottom: 1px solid #1e6b47; }
.add-sheet { margin-left: 13px; }
.hscroll { display: flex; align-items: center; width: 352px; height: 10px; margin-left: auto; padding-right: 11px; }
.hscroll .grip { width: 8px; line-height: 10px; margin-right: 4px; }
.hscroll button { width: 9px; height: 9px; background: #fff; }
.htrack { flex: 1; display: flex; height: 9px; background: #d0d0d0; }
.hthumb { width: 94%; background: #fff; border: 1px solid #bbb; }
.status { display: flex; align-items: center; justify-content: space-between; height: 12px; padding: 0 5px 0 4px; flex: none; background: #e6e6e6; }
.status-tools { display: flex; align-items: center; height: 12px; }
.display-set { gap: 1px; margin-right: 10px; color: #222; }
.view { width: 23px; height: 12px; }
.status .pressed { background: #bbb; }
.minus { margin-left: 3px; }
.zoom { appearance: none; width: 60px; height: 8px; margin: 0 2px; background: linear-gradient(#777, #777) center / 100% 1px no-repeat; }
.zoom::-webkit-slider-thumb { appearance: none; width: 3px; height: 7px; background: #333; }
.percent { margin-left: 6px; }

.taskbar { display: flex; align-items: stretch; height: 23px; flex: none; background: linear-gradient(90deg, #172b36 70%, #172238); color: #eee; }
.start { width: 28px; background: #17303b; }
.search { display: flex; align-items: center; width: 197px; padding-left: 7px; gap: 6px; background: #eee; color: #222; font-size: 8px; }
.search input { flex: 1; min-width: 0; background: none; padding: 0; color: #222; }
.search input::placeholder { color: #222; opacity: 1; }
.apps { display: grid; grid-template-columns: repeat(13, 1fr); width: 372px; }
.apps .open { border-bottom: 2px solid #88b6d7; border-top: 2px solid transparent; margin: 0 3px; }
.apps .active { background: #40515a; margin: 0 1px; }
.tray { display: flex; align-items: center; gap: 11px; margin-left: auto; }
.clock { display: flex; flex-direction: column; align-items: center; justify-content: center; width: 43px; }
.notice { width: 33px; }

.mark-box { position: absolute; left: 55px; top: 138px; width: 140px; height: 28px; border: 5px solid #fe0000; border-radius: 8px; }
.mark-line { position: absolute; left: 189px; top: 141px; }
.callout { position: absolute; display: flex; flex-direction: column; align-items: center; justify-content: center; border: 4px solid #fe0000; border-radius: 12px; background: #fff; color: #fe0000; font-weight: 500; font-feature-settings: normal; white-space: nowrap; }
.callout-small { left: 251px; top: 105px; width: 239px; height: 101px; padding-bottom: 4px; font-size: 24px; line-height: 36px; }
.callout-large { left: 550px; top: 53px; width: 297px; height: 296px; padding-bottom: 6px; border-radius: 14px; font-size: 39px; line-height: 55px; }
.pointer { position: absolute; left: 364px; top: 274px; }

.scrim { position: absolute; left: 0; right: 0; bottom: 0; height: 110px; background: linear-gradient(transparent, rgba(0,0,0,.15) 14%, rgba(0,0,0,.3) 30%, rgba(0,0,0,.4) 48%, rgba(0,0,0,.52) 68%, rgba(0,0,0,.64) 100%); }
.back { position: absolute; left: 9px; top: 5px; }
.previous { position: absolute; left: 4px; top: 50%; transform: translateY(-50%); }
.controls { position: absolute; left: 13px; right: 13px; bottom: 22px; color: #eee; }
.seek { appearance: none; display: block; width: 100%; height: 11px; background: linear-gradient(90deg, #459ccd 12.300%, transparent 12.300%) center / 100% 2px no-repeat, linear-gradient(rgba(255,255,255,.18), rgba(255,255,255,.18)) center / 100% 1px no-repeat; }
.seek::-webkit-slider-thumb { appearance: none; width: 11px; height: 11px; border: 2px solid #4eafe3; border-radius: 50%; background: #888; }
.times { display: flex; justify-content: space-between; margin-top: 1px; font: 6px/12px "Noto Sans", sans-serif; }
.control-row { display: grid; grid-template-columns: 1fr auto 1fr; align-items: center; height: 14px; margin-top: 5px; }
.left-controls { display: flex; gap: 15px; padding-left: 8px; }
.center-controls { display: flex; align-items: center; gap: 17px; }
.skip { flex-direction: column; font: bold 7px/6px "Noto Sans", sans-serif; }
.right-controls { display: flex; align-items: center; justify-content: flex-end; gap: 16px; padding-right: 8px; }
.watermark { position: absolute; right: 157px; bottom: 1px; font: 19px/24px "Noto Sans", sans-serif; color: #8c8f92; }
```
FILE: sheet.js
```js
const columns = ['A', 'B', 'C', 'D', 'E', 'F', 'G', 'H', 'I', 'J', 'K', 'L', 'M', '', '', '', '', '', '', '', ''];
const data = [
  ['商品名', '単価', '個数', '合計金額'],
  ['商品A', '100', '5', ''],
  ['商品B', '150', '10', ''],
  ['商品C', '200', '15', ''],
  ['合計', '', '', '']
];
function cell(row, col) {
  const text = (data[row] && data[row][col]) || '';
  const names = [];
  if (row < 5 && col < 4) {
    names.push('boxed');
    if (row === 0) names.push('heading');
    else if (col === 0) names.push('item');
    else names.push('number');
  }
  return `<td class="${names.join(' ')}">${text}</td>`;
}
const cols = columns.map((c, i) => {
  if (i === 0) return '<col class="col-a">';
  if (i === columns.length - 1) return '<col>';
  return `<col class="${i % 6 === 5 ? 'col-slim' : 'col'}">`;
}).join('');
const head = columns.map(c => `<th>${c}</th>`).join('');
let body = '';
for (let r = 0; r < 29; r++) {
  body += `<tr><th>${r + 1}</th>${columns.map((c, i) => cell(r, i)).join('')}</tr>`;
}
document.getElementById('cells').innerHTML =
  `<colgroup><col class="col-head">${cols}</colgroup><thead><tr><th class="corner"></th>${head}</tr></thead><tbody>${body}</tbody>`;
```
